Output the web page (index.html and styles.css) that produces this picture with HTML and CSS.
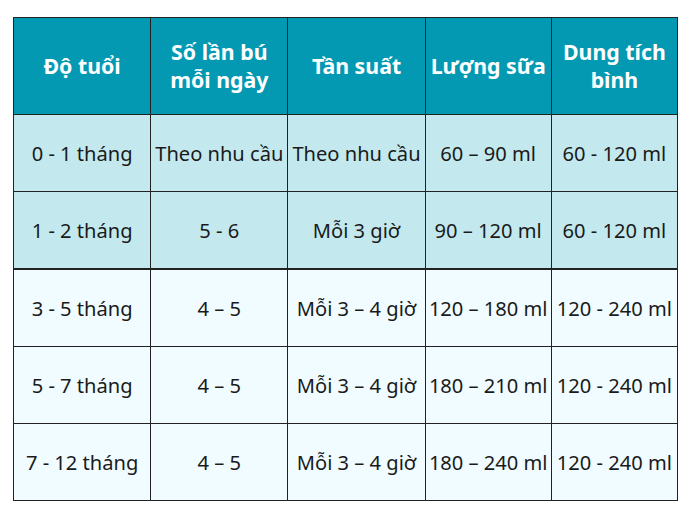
FILE: index.html
```html
<!DOCTYPE html>
<html lang="vi">
<head>
<meta charset="utf-8">
<link rel="stylesheet" href="styles.css">
</head>
<body>
<table class="feed">
  <colgroup>
    <col class="c-wide"><col class="c-wide"><col class="c-wide"><col class="c-narrow"><col class="c-narrow">
  </colgroup>
  <thead>
    <tr>
      <th>Độ tuổi</th>
      <th>Số lần bú<br>mỗi ngày</th>
      <th>Tần suất</th>
      <th>Lượng sữa</th>
      <th>Dung tích<br>bình</th>
    </tr>
  </thead>
  <tbody>
    <tr class="row-a">
      <td>0 - 1 tháng</td><td>Theo nhu cầu</td><td>Theo nhu cầu</td><td>60 – 90 ml</td><td>60 - 120 ml</td>
    </tr>
    <tr class="row-a">
      <td>1 - 2 tháng</td><td>5 - 6</td><td>Mỗi 3 giờ</td><td>90 – 120 ml</td><td>60 - 120 ml</td>
    </tr>
    <tr class="row-b row-split">
      <td>3 - 5 tháng</td><td>4 – 5</td><td>Mỗi 3 – 4 giờ</td><td>120 – 180 ml</td><td>120 - 240 ml</td>
    </tr>
    <tr class="row-b">
      <td>5 - 7 tháng</td><td>4 – 5</td><td>Mỗi 3 – 4 giờ</td><td>180 – 210 ml</td><td>120 - 240 ml</td>
    </tr>
    <tr class="row-b">
      <td>7 - 12 tháng</td><td>4 – 5</td><td>Mỗi 3 – 4 giờ</td><td>180 – 240 ml</td><td>120 - 240 ml</td>
    </tr>
  </tbody>
</table>
</body>
</html>
```
FILE: styles.css
```css
html, body {
  margin: 0;
  padding: 0;
  background: #ffffff;
}
body {
  padding: 17px 0 0 13px;
  font-family: "Noto Sans", "Open Sans", sans-serif;
}
.feed {
  border-collapse: collapse;
  table-layout: fixed;
  width: 665px;
  border: 1px solid #222;
}
.c-wide { width: 137px; }
.c-narrow { width: 126px; }
.feed th, .feed td {
  border: 1px solid #222;
  text-align: center;
  vertical-align: middle;
  padding: 0;
  white-space: nowrap;
}
.feed th {
  background: #0399b3;
  color: #ffffff;
  font-weight: 700;
  font-size: 21.3px;
  line-height: 28px;
  height: 96px;
}
.feed td {
  color: #1a1a1a;
  font-size: 20.1px;
  height: 76px;
}
.row-a td { background: #c3e9ef; }
.row-b td { background: #f0fcff; }
.row-split td { border-top: 2px solid #222; }
```
